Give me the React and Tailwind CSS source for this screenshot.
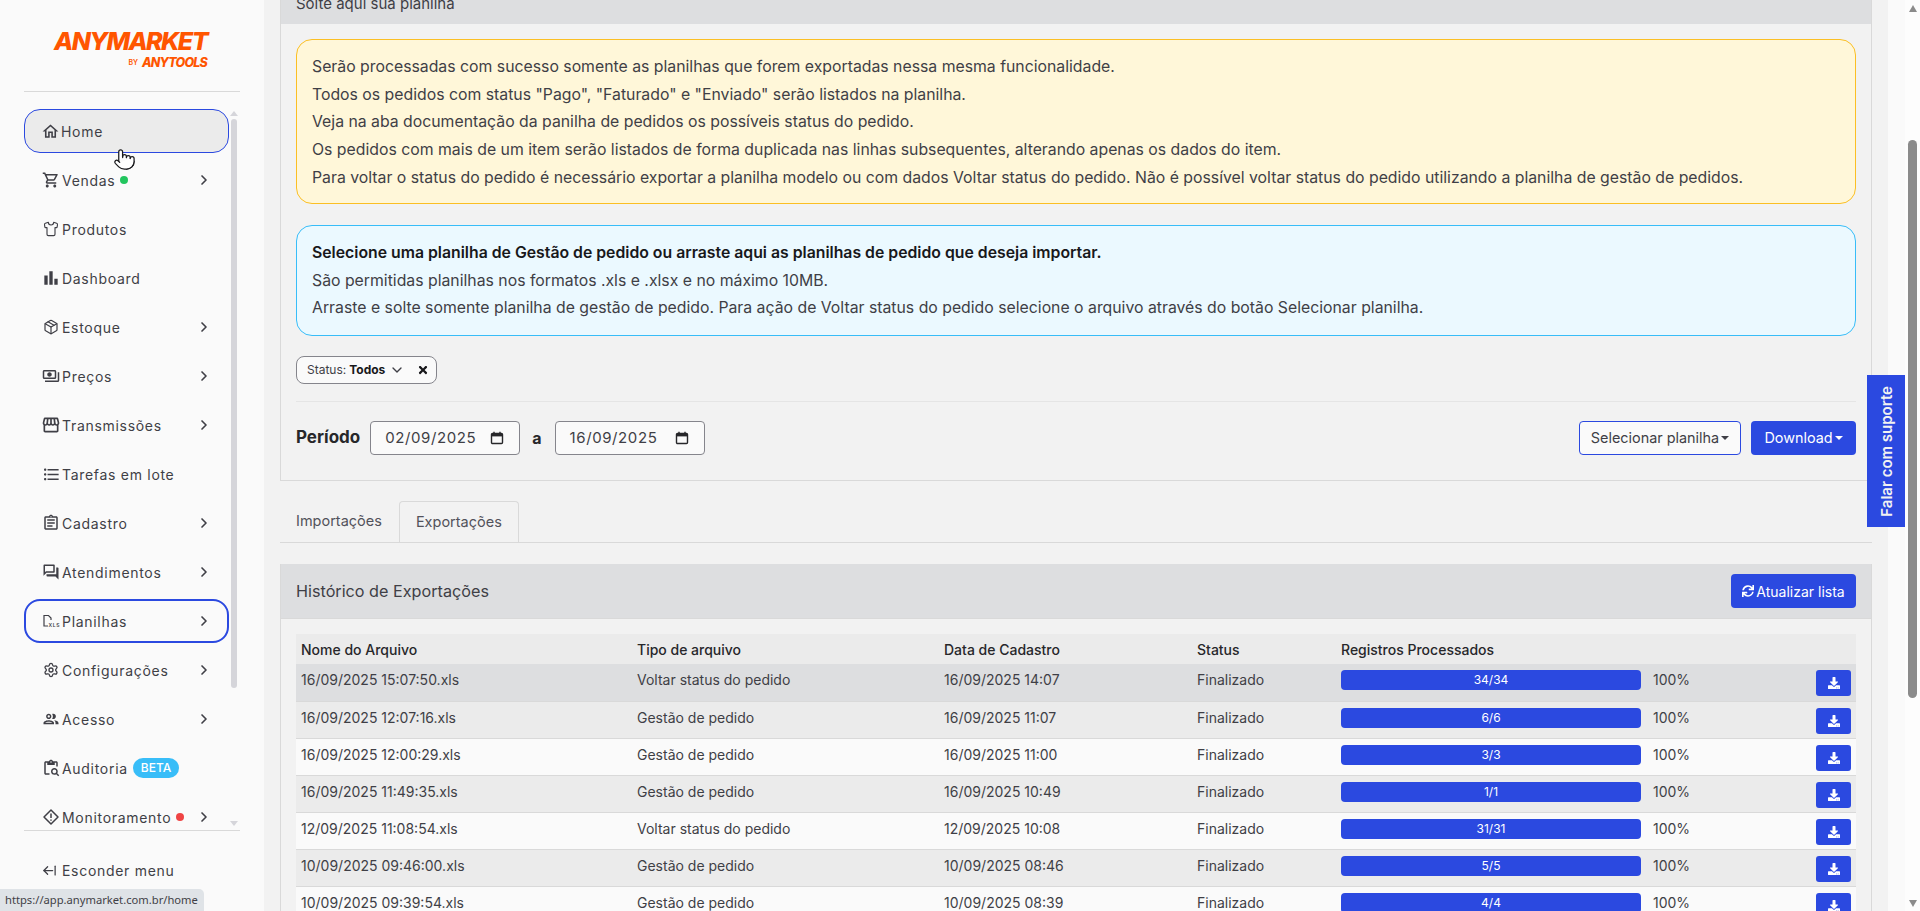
import { ChevronRight, ChevronDown, Shirt, Package, ArrowLeftFromLine, Pointer, Settings } from "lucide-react";
import { FaTimes, FaSync, FaDownload } from "react-icons/fa";
import {
  MdOutlineHome,
  MdOutlineShoppingCart,
  MdBarChart,
  MdOutlinePayments,
  MdOutlineStorefront,
  MdFormatListBulleted,
  MdOutlineAssignment,
  MdOutlineForum,
  MdOutlineGroup,
  MdOutlineContentPasteSearch,
} from "react-icons/md";

const BLUE = "bg-[#2b49e0]";

function XlsIcon() {
  return (
    <svg width="20" height="18" viewBox="0 0 20 18" fill="none" stroke="#3f3f46" strokeWidth="1.2">
      <path d="M7 14H3V3.5h4.5L10 6v2" />
      <text x="7.5" y="14.5" fontSize="5" fontWeight="600" fill="#3f3f46" stroke="none" fontFamily="Inter, sans-serif">XLS</text>
    </svg>
  );
}

function DiamondIcon() {
  return (
    <svg width="18" height="18" viewBox="0 0 18 18" fill="none" stroke="#3f3f46" strokeWidth="1.5">
      <path d="M9 2l7 7-7 7-7-7z" strokeLinejoin="round" />
      <path d="M9 5.5v4.5M9 11.5v1.3" />
    </svg>
  );
}

const menu = [
  { label: "Home", icon: <MdOutlineHome size={19} />, active: true },
  { label: "Vendas", icon: <MdOutlineShoppingCart size={18} />, arrow: true, dot: "bg-[#22c55e]" },
  { label: "Produtos", icon: <Shirt size={16} strokeWidth={1.7} /> },
  { label: "Dashboard", icon: <MdBarChart size={20} /> },
  { label: "Estoque", icon: <Package size={16} strokeWidth={1.8} />, arrow: true },
  { label: "Preços", icon: <MdOutlinePayments size={18} />, arrow: true },
  { label: "Transmissões", icon: <MdOutlineStorefront size={20} />, arrow: true },
  { label: "Tarefas em lote", icon: <MdFormatListBulleted size={19} /> },
  { label: "Cadastro", icon: <MdOutlineAssignment size={18} />, arrow: true },
  { label: "Atendimentos", icon: <MdOutlineForum size={18} />, arrow: true },
  { label: "Planilhas", icon: <XlsIcon />, arrow: true, ring: true },
  { label: "Configurações", icon: <Settings size={16} strokeWidth={2} />, arrow: true },
  { label: "Acesso", icon: <MdOutlineGroup size={18} />, arrow: true },
  { label: "Auditoria", icon: <MdOutlineContentPasteSearch size={18} />, badge: "BETA" },
  { label: "Monitoramento", icon: <DiamondIcon />, arrow: true, dot: "bg-[#ef4444]" },
];

const rows = [
  ["16/09/2025 15:07:50.xls", "Voltar status do pedido", "16/09/2025 14:07", "34/34", "bg-[#dddee0]", "h-[38px]"],
  ["16/09/2025 12:07:16.xls", "Gestão de pedido", "16/09/2025 11:07", "6/6", "bg-[#ebebeb]", "h-[37px]"],
  ["16/09/2025 12:00:29.xls", "Gestão de pedido", "16/09/2025 11:00", "3/3", "bg-[#fafafa]", "h-[37px]"],
  ["16/09/2025 11:49:35.xls", "Gestão de pedido", "16/09/2025 10:49", "1/1", "bg-[#ebebeb]", "h-[37px]"],
  ["12/09/2025 11:08:54.xls", "Voltar status do pedido", "12/09/2025 10:08", "31/31", "bg-[#fafafa]", "h-[37px]"],
  ["10/09/2025 09:46:00.xls", "Gestão de pedido", "10/09/2025 08:46", "5/5", "bg-[#ebebeb]", "h-[37px]"],
  ["10/09/2025 09:39:54.xls", "Gestão de pedido", "10/09/2025 08:39", "4/4", "bg-[#fafafa]", "h-[37px]"],
];

function MenuItem({ item }) {
  return (
    <div
      className={`mb-[5px] flex h-[44px] shrink-0 items-center rounded-[16px] pl-[15px] pr-[15px] text-[14px] tracking-[0.7px] text-[#3f3f46] ${
        item.active ? "border border-[#2b49e0] bg-[#ebebeb]" : item.ring ? "border-2 border-[#2b49e0]" : "border-2 border-transparent"
      }`}
    >
      <span className="flex w-[20px] shrink-0 items-center justify-center">{item.icon}</span>
      <span className="ml-[1px]">{item.label}</span>
      {item.dot && <span className={`ml-[5px] size-[8px] rounded-full ${item.dot}`} />}
      {item.badge && (
        <span className="ml-[5px] rounded-full bg-[#38bdf8] px-[8px] py-[1px] text-[12px] font-medium tracking-normal text-white">{item.badge}</span>
      )}
      {item.arrow && <ChevronRight size={16} strokeWidth={2.5} className="ml-auto" />}
    </div>
  );
}

function Sidebar() {
  return (
    <aside className="flex h-full w-[264px] shrink-0 flex-col bg-[#fafafa]">
      <div className="mx-6 flex h-[92px] shrink-0 flex-col items-end border-b border-[#d9d9d9] pr-[33px] pt-[29px] text-[#ff5500]">
        <span className="text-[25px] font-extrabold italic leading-[25px] tracking-[-1.6px]">ANYMARKET</span>
        <span className="mt-[2px] flex items-center text-[12.5px] font-extrabold italic leading-[14px] tracking-[-0.8px]">
          <span className="mr-[4px] text-[7px] font-semibold not-italic tracking-normal">BY</span>
          ANYTOOLS
        </span>
      </div>
      <div className="flex h-[738px] shrink-0 overflow-hidden pt-[17px]">
        <nav className="ml-6 flex w-[205px] shrink-0 flex-col">
          {menu.map((item) => (
            <MenuItem key={item.label} item={item} />
          ))}
        </nav>
        <div className="ml-[2px] flex w-[6px] flex-col items-center">
          <span className="mt-[2px] border-x-[4px] border-b-[5px] border-x-transparent border-b-[#d5d5da]" />
          <span className="mt-[3px] h-[569px] w-[6px] rounded-full bg-[#d5d5da]" />
          <span className="mt-[133px] border-x-[4px] border-t-[5px] border-x-transparent border-t-[#d5d5da]" />
        </div>
      </div>
      <div className="mx-6 border-t border-[#d9d9d9]" />
      <div className="ml-[42px] mt-[29px] flex items-center gap-[5px] text-[14px] tracking-[0.7px] text-[#3f3f46]">
        <ArrowLeftFromLine size={15} strokeWidth={2} />
        Esconder menu
      </div>
    </aside>
  );
}

function DateBox({ value }) {
  return (
    <div className="flex h-[34px] w-[150px] items-center justify-between rounded-[4px] border border-[#85858c] bg-[#fafafa] pl-[14px] pr-[15px] text-[15px] tracking-[0.6px] text-[#3f3f46]">
      {value}
      <svg width="14" height="14" viewBox="0 0 14 14" fill="none" stroke="#27272a">
        <rect x="1.5" y="2.5" width="11" height="10" rx="1" strokeWidth="1.4" />
        <path d="M1.5 4.2h11" strokeWidth="2.4" />
        <path d="M4 .8v2M10 .8v2" strokeWidth="1.4" />
      </svg>
    </div>
  );
}

function Caret() {
  return <span className="ml-[2px] inline-block border-x-[4px] border-t-[4px] border-x-transparent border-t-current" />;
}

function Row({ row }) {
  return (
    <div className={`grid grid-cols-[336px_307px_253px_144px_312px_163px_auto] items-start border-b border-[#d9d9d9] pl-[5px] text-[14px] text-[#3f3f46] ${row[4]} ${row[5]}`}>
      <span className="pt-[5px]">{row[0]}</span>
      <span className="pt-[5px]">{row[1]}</span>
      <span className="pt-[5px]">{row[2]}</span>
      <span className="pt-[5px]">Finalizado</span>
      <div className="pr-[12px] pt-[6px]">
        <div className={`flex h-[20px] items-center justify-center rounded-[4px] text-[12px] text-white ${BLUE}`}>{row[3]}</div>
      </div>
      <span className="pt-[5px]">100%</span>
      <button className={`mt-[6px] flex h-[26px] w-[35px] items-center justify-center rounded-[3px] text-white ${BLUE}`}>
        <FaDownload size={12} />
      </button>
    </div>
  );
}

function Main() {
  return (
    <main className="h-full w-[1624px] shrink-0 overflow-hidden bg-[#f2f2f2] pl-4 pr-4 font-[Inter,sans-serif]">
      <section className="border-x border-b border-[#d9d9d9] pb-[25px]">
        <div className="h-6 overflow-hidden bg-[#dddee0] px-[15px] text-[15px] leading-6 text-[#3f3f46]">
          <div className="-mt-[8px]">Solte aqui sua planilha</div>
        </div>
        <div className="px-[15px] pt-[15px]">
          <div className="h-[165px] rounded-[16px] border border-[#fbbf24] bg-[#fff7d9] px-[15px] pt-[13px] text-[15.8px] leading-[27.7px] text-[#3f3f46]">
            <p>Serão processadas com sucesso somente as planilhas que forem exportadas nessa mesma funcionalidade.</p>
            <p>Todos os pedidos com status "Pago", "Faturado" e "Enviado" serão listados na planilha.</p>
            <p>Veja na aba documentação da panilha de pedidos os possíveis status do pedido.</p>
            <p>Os pedidos com mais de um item serão listados de forma duplicada nas linhas subsequentes, alterando apenas os dados do item.</p>
            <p>Para voltar o status do pedido é necessário exportar a planilha modelo ou com dados Voltar status do pedido. Não é possível voltar status do pedido utilizando a planilha de gestão de pedidos.</p>
          </div>
          <div className="mt-[21px] h-[111px] rounded-[16px] border border-[#38bdf8] bg-[#ebf9ff] px-[15px] pt-[13px] text-[15.8px] leading-[27.7px] text-[#3f3f46]">
            <p className="font-semibold text-[#18181b]">Selecione uma planilha de Gestão de pedido ou arraste aqui as planilhas de pedido que deseja importar.</p>
            <p>São permitidas planilhas nos formatos .xls e .xlsx e no máximo 10MB.</p>
            <p>Arraste e solte somente planilha de gestão de pedido. Para ação de Voltar status do pedido selecione o arquivo através do botão Selecionar planilha.</p>
          </div>
          <div className="mt-[20px] flex h-[28px] w-[141px] items-center rounded-[8px] border border-[#85858c] bg-[#fafafa] pl-[10px] text-[12px] text-[#3f3f46]">
            Status:
            <b className="ml-[3px] font-bold text-[#18181b]">Todos</b>
            <ChevronDown size={16} strokeWidth={2} className="ml-[4px]" />
            <FaTimes size={12} className="ml-[12px] text-[#18181b]" />
          </div>
          <div className="mt-[17px] border-t border-[#e5e5e5]" />
          <div className="mt-[19px] flex items-center">
            <span className="mr-[10px] text-[17px] font-bold text-[#27272a]">Período</span>
            <DateBox value="02/09/2025" />
            <span className="ml-[12px] mr-[13px] text-[16px] font-bold text-[#27272a]">a</span>
            <DateBox value="16/09/2025" />
            <button className="ml-auto flex h-[34px] w-[162px] items-center justify-center rounded-[4px] border border-[#2b49e0] bg-[#fafafa] text-[14.4px] text-[#3f3f46]">
              Selecionar planilha
              <Caret />
            </button>
            <button className={`ml-[10px] flex h-[34px] w-[105px] items-center justify-center rounded-[4px] text-[14.4px] text-white ${BLUE}`}>
              Download
              <Caret />
            </button>
          </div>
        </div>
      </section>

      <div className="mt-[20px] flex h-[42px] items-end border-b border-[#d9d9d9] pl-[16px] text-[14.5px] text-[#52525b]">
        <span className="mb-[10px] mr-[17px]">Importações</span>
        <span className="flex h-[41px] items-center rounded-t-[4px] border-x border-t border-[#d9d9d9] px-[16px]">Exportações</span>
      </div>

      <section className="mt-[21px] border-x border-[#d9d9d9]">
        <div className="flex h-[55px] items-center justify-between border-b border-[#d9d9d9] bg-[#dddee0] px-[15px]">
          <span className="text-[16.2px] text-[#3f3f46]">Histórico de Exportações</span>
          <button className={`flex h-[34px] w-[125px] items-center justify-center gap-[2px] rounded-[4px] text-[14px] text-white ${BLUE}`}>
            <FaSync size={12} />
            Atualizar lista
          </button>
        </div>
        <div className="px-[15px] pt-[15px]">
          <div className="grid h-[30px] grid-cols-[336px_307px_253px_144px_1fr] items-center bg-[#ebebeb] pl-[5px] text-[14px] font-medium text-[#27272a]">
            <span>Nome do Arquivo</span>
            <span>Tipo de arquivo</span>
            <span>Data de Cadastro</span>
            <span>Status</span>
            <span>Registros Processados</span>
          </div>
          {rows.map((row) => (
            <Row key={row[0]} row={row} />
          ))}
        </div>
      </section>
    </main>
  );
}

export default function App() {
  return (
    <div className="relative flex h-screen w-full overflow-hidden bg-[#fafafa] font-[Inter,sans-serif]">
      <Sidebar />
      <Main />
      <div className="w-[17px] shrink-0 bg-[#fafafa]" />
      <div className="flex w-[15px] shrink-0 flex-col items-center bg-[#fdfdfd]">
        <span className="mt-[5px] border-x-[4.5px] border-b-[7px] border-x-transparent border-b-[#8b8b8b]" />
        <span className="mt-[128px] h-[558px] w-[9px] rounded-[4.5px] bg-[#8b8b8b]" />
        <span className="mt-[202px] border-x-[4.5px] border-t-[7px] border-x-transparent border-t-[#8b8b8b]" />
      </div>

      <div className={`absolute right-[15px] top-[375px] flex h-[152px] w-[38px] items-center justify-center ${BLUE}`}>
        <span className="ml-[2px] rotate-180 text-[15px] font-semibold text-[#f2f2f2] [writing-mode:vertical-rl]">Falar com suporte</span>
      </div>
      <Pointer size={23} fill="#fff" strokeWidth={1.3} className="absolute left-[113px] top-[148px] text-[#18181b]" />
      <div className="absolute bottom-0 left-0 flex h-[22px] w-[204px] items-center rounded-tr-[5px] bg-[#dfe3e7] pl-[5px] font-['Noto_Sans',sans-serif] text-[11.2px] text-[#3f3f46]">
        https://app.anymarket.com.br/home
      </div>
    </div>
  );
}
